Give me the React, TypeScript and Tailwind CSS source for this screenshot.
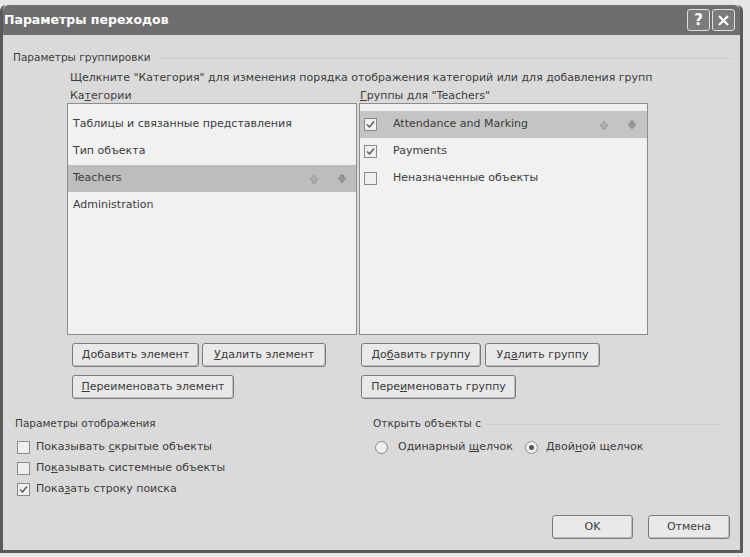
import React from 'react';

const font = { fontFamily: '"DejaVu Sans", Tahoma, sans-serif' };

const Btn: React.FC<{ w: string; children: React.ReactNode }> = ({ w, children }) => (
  <div
    className={`${w} h-[24px] flex items-center justify-center rounded-[3px] border border-[#7a7a7a] bg-[#e9e9e9] text-[11px] text-[#3a3a3a] shadow-[inset_-1px_-1px_0_#bdbdbd]`}
  >
    {children}
  </div>
);

const Check: React.FC<{ checked?: boolean }> = ({ checked }) => (
  <div className="w-[13px] h-[13px] shrink-0 border border-[#8a8a8a] bg-[#efefef] flex items-center justify-center">
    {checked && (
      <svg width="9" height="9" viewBox="0 0 9 9">
        <path d="M1 4.5 L3.5 7 L8 1.5" fill="none" stroke="#555" strokeWidth="1.4" />
      </svg>
    )}
  </div>
);

const Radio: React.FC<{ on?: boolean }> = ({ on }) => (
  <div className="w-[13px] h-[13px] shrink-0 rounded-full border border-[#8a8a8a] bg-[#efefef] flex items-center justify-center">
    {on && <div className="w-[5px] h-[5px] rounded-full bg-[#555]" />}
  </div>
);

const Arrows: React.FC = () => (
  <div className="flex items-center gap-[18px]">
    <svg width="10" height="10" viewBox="0 0 10 10">
      <path d="M5 1 L9 6 L6.5 6 L6.5 9 L3.5 9 L3.5 6 L1 6 Z" fill="#b0b0b0" stroke="#8a8a8a" strokeWidth="0.6" />
    </svg>
    <svg width="10" height="10" viewBox="0 0 10 10">
      <path d="M5 9 L9 4 L6.5 4 L6.5 1 L3.5 1 L3.5 4 L1 4 Z" fill="#9a9a9a" stroke="#777" strokeWidth="0.6" />
    </svg>
  </div>
);

const U: React.FC<{ children: React.ReactNode }> = ({ children }) => <span className="underline">{children}</span>;

export default function App() {
  return (
    <div className="w-[750px] h-[557px] bg-[#e6e6e6] pt-[5px] overflow-hidden" style={font}>
      <div className="w-[743px] h-[548px] border-[3px] border-[#5a5a5a] border-t-0 rounded-t-[6px] bg-[#dadada] flex flex-col overflow-hidden">
        {/* title bar */}
        <div className="h-[30px] shrink-0 bg-[#6e6e6e] rounded-t-[6px] flex items-center justify-between pl-[1px] pr-[5px]">
          <span className="text-white font-bold text-[12.5px]">Параметры переходов</span>
          <div className="flex gap-[2px]">
            <div className="w-[23px] h-[22px] rounded-[3px] border border-[#e0e0e0] bg-[#7c7c7c] flex items-center justify-center text-white font-bold text-[15px]">
              ?
            </div>
            <div className="w-[23px] h-[22px] rounded-[3px] border border-[#e0e0e0] bg-[#7c7c7c] flex items-center justify-center">
              <svg width="13" height="13" viewBox="0 0 13 13">
                <path d="M2 2 L11 11 M11 2 L2 11" stroke="#fff" strokeWidth="2.2" />
              </svg>
            </div>
          </div>
        </div>

        {/* client */}
        <div className="flex-1 flex flex-col pl-[10px] pr-[7px] text-[11px] text-[#3c3c3c]">
          <div className="mt-[14px] leading-[16px] flex items-center gap-[6px]">
            <span className="text-[10.5px]">Параметры группировки</span>
            <div className="flex-1 h-px bg-[#cfcfcf] mt-[2px]" />
          </div>
          <div className="mt-[5px] leading-[16px] pl-[57px]">
            Щелкните "Категория" для изменения порядка отображения категорий или для добавления групп
          </div>

          <div className="mt-[3px] pl-[54px] flex gap-[2px]">
            {/* left column */}
            <div className="w-[290px] flex flex-col">
              <div className="leading-[14px] h-[14px] pl-[3px]">
                Ка<U>т</U>егории
              </div>
              <div className="h-[232px] border border-[#8c8c8c] bg-[#f1f1f1] pt-[7px]">
                <div className="h-[27px] flex items-center pl-[5px]">Таблицы и связанные представления</div>
                <div className="h-[27px] flex items-center pl-[5px]">Тип объекта</div>
                <div className="h-[27px] flex items-center justify-between pl-[5px] pr-[9px] bg-[#bdbdbd]">
                  <span>Teachers</span>
                  <Arrows />
                </div>
                <div className="h-[27px] flex items-center pl-[5px]">Administration</div>
              </div>
              <div className="mt-[8px] pl-[5px] flex gap-[3px]">
                <Btn w="w-[127px]">
                  <U>Д</U>обавить элемент
                </Btn>
                <Btn w="w-[124px]">
                  <U>У</U>далить элемент
                </Btn>
              </div>
              <div className="mt-[8px] pl-[5px] flex">
                <Btn w="w-[162px]">
                  <U>П</U>ереименовать элемент
                </Btn>
              </div>
            </div>

            {/* right column */}
            <div className="w-[289px] flex flex-col">
              <div className="leading-[14px] h-[14px] pl-[1px]">
                <U>Г</U>руппы для "Teachers"
              </div>
              <div className="h-[232px] border border-[#8c8c8c] bg-[#f1f1f1] pt-[7px]">
                <div className="h-[27px] flex items-center justify-between pl-[4px] pr-[10px] bg-[#c4c4c4]">
                  <div className="flex items-center gap-[16px]">
                    <Check checked />
                    <span>Attendance and Marking</span>
                  </div>
                  <Arrows />
                </div>
                <div className="h-[27px] flex items-center gap-[16px] pl-[4px]">
                  <Check checked />
                  <span>Payments</span>
                </div>
                <div className="h-[27px] flex items-center gap-[16px] pl-[4px]">
                  <Check />
                  <span>Неназначенные объекты</span>
                </div>
              </div>
              <div className="mt-[8px] pl-[2px] flex gap-[4px]">
                <Btn w="w-[120px]">
                  До<U>б</U>авить группу
                </Btn>
                <Btn w="w-[115px]">
                  Уд<U>а</U>лить группу
                </Btn>
              </div>
              <div className="mt-[8px] pl-[2px] flex">
                <Btn w="w-[155px]">
                  Пере<U>и</U>меновать группу
                </Btn>
              </div>
            </div>
          </div>

          {/* bottom groups */}
          <div className="mt-[17px] flex">
            <div className="w-[360px] flex flex-col">
              <div className="leading-[14px] pl-[2px] text-[10.5px]">Параметры отображения</div>
              <div className="mt-[7px] pl-[4px]">
                <div className="h-[21px] flex items-center gap-[6px]">
                  <Check />
                  <span>
                    Показывать <U>с</U>крытые объекты
                  </span>
                </div>
                <div className="h-[21px] flex items-center gap-[6px]">
                  <Check />
                  <span>
                    По<U>к</U>азывать системные объекты
                  </span>
                </div>
                <div className="h-[21px] flex items-center gap-[6px]">
                  <Check checked />
                  <span>
                    Пока<U>з</U>ать строку поиска
                  </span>
                </div>
              </div>
            </div>
            <div className="flex-1 flex flex-col">
              <div className="leading-[14px] flex items-center gap-[6px]">
                <span className="text-[10.5px] whitespace-nowrap">Открыть объекты с</span>
                <div className="flex-1 mr-[10px] h-px bg-[#cfcfcf] mt-[2px]" />
              </div>
              <div className="mt-[7px] h-[21px] flex items-center pl-[2px]">
                <Radio />
                <span className="ml-[10px]">
                  Одинарный <U>щ</U>елчок
                </span>
                <div className="ml-[12px]">
                  <Radio on />
                </div>
                <span className="ml-[8px]">
                  Двой<U>н</U>ой щелчок
                </span>
              </div>
            </div>
          </div>

          <div className="mt-[15px] flex justify-end gap-[15px] pr-[3px]">
            <Btn w="w-[81px]">OK</Btn>
            <Btn w="w-[82px]">Отмена</Btn>
          </div>
        </div>
      </div>
    </div>
  );
}
